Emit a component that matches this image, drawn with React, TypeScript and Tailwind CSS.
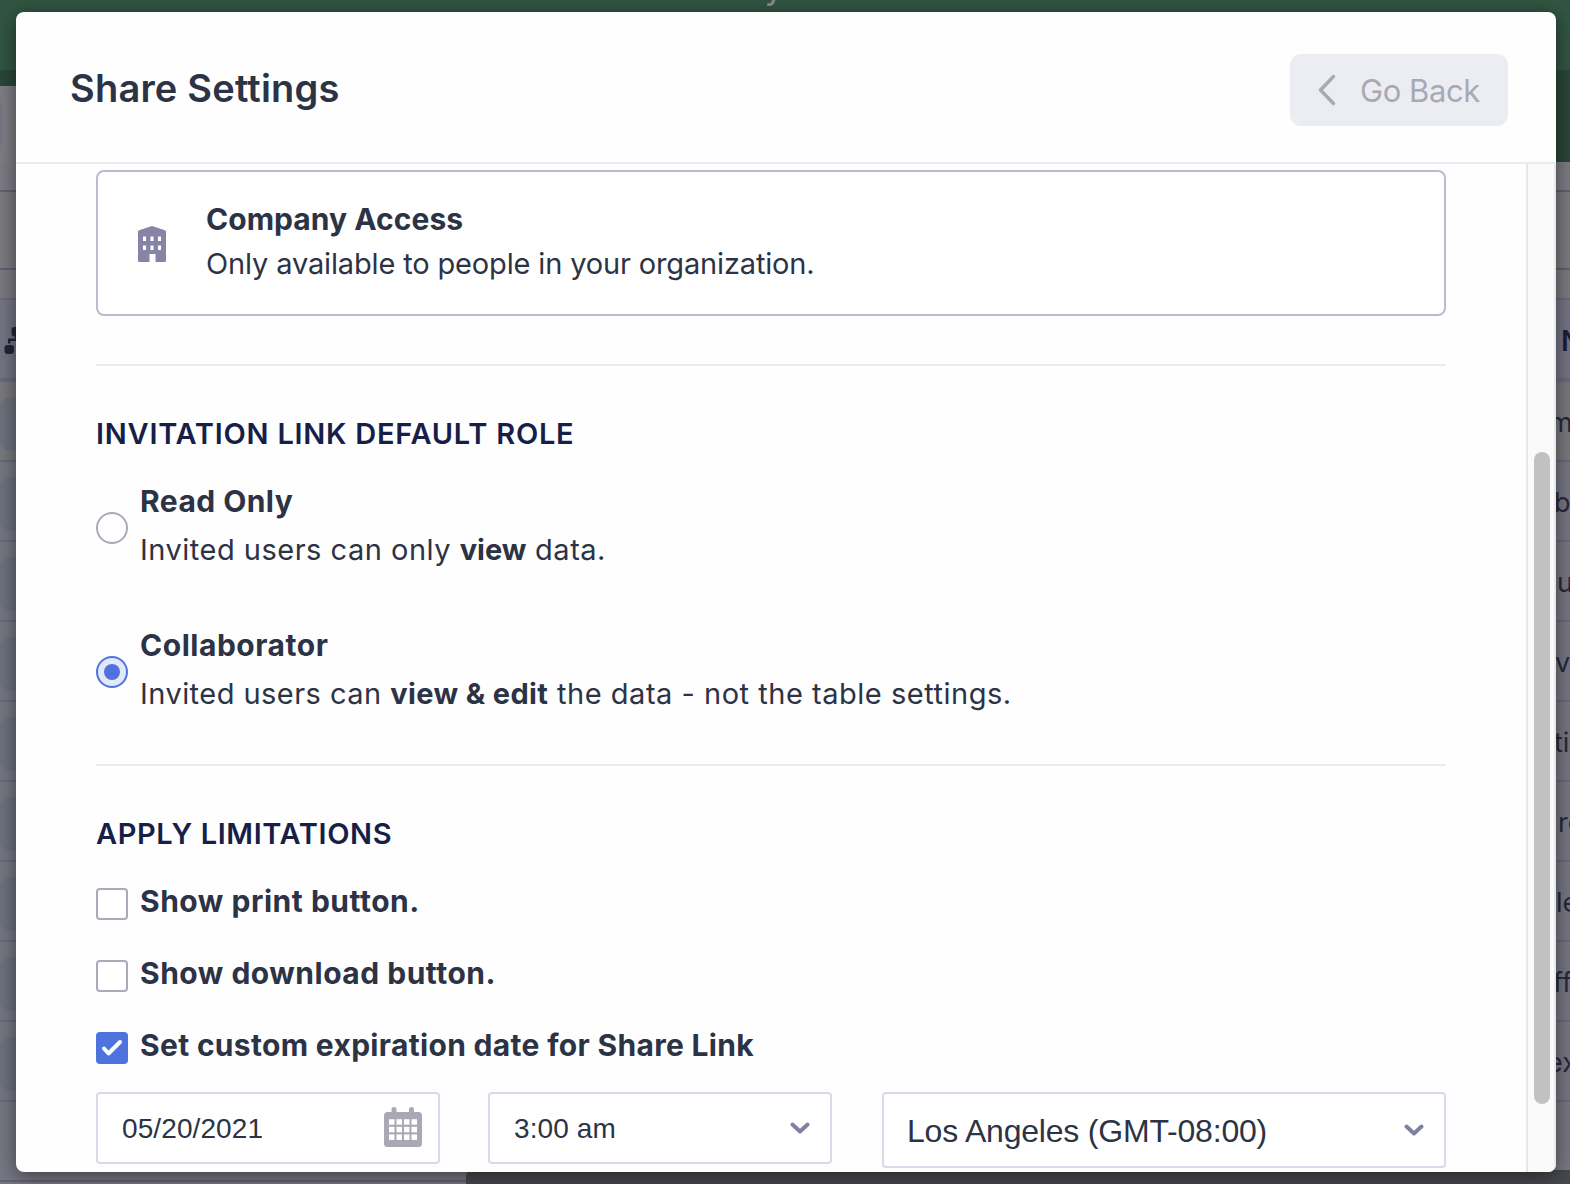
import type { ReactNode } from "react";
import clsx from "clsx";

const NAMES = ["m", "b", "u", "v", "ti", "re", "le", "ff", "ex"];
const NAME_OFFSETS = ["ml-[-7px]", "ml-[-2px]", "ml-[1px]", "ml-[-1px]", "ml-[-2px]", "ml-[2px]", "ml-[0px]", "ml-[-3px]", "ml-[-9px]"];

// Table page that stays visible around the edges of the dialog.
function TablePage() {
  return (
    <div className="flex h-[1184px] w-[1570px] flex-col bg-[#787883]">
      <div className="flex h-[70px] shrink-0 justify-center bg-[#325542]">
        <span className="-mt-[28px] ml-[-22px] text-[34px] leading-[30px] text-[#8a8c96]">y</span>
      </div>
      <div className="flex h-[92px] shrink-0 justify-between bg-[#2b4639]">
        <div className="mt-4 flex w-[400px] bg-[#7e7e85] pt-4">
          <div className="-ml-2 h-[44px] w-[10px] rounded-[4px] bg-[#747485]" />
        </div>
      </div>
      <div className="h-[30px] shrink-0 border-b-2 border-[#606072] bg-[#7c7c84]" />
      <div className="h-[78px] shrink-0 border-b-2 border-[#606072] bg-[#7b7b80]" />
      <div className="h-[30px] shrink-0 border-b-2 border-[#6a6a7e] bg-[#7a7a80]" />
      <div className="flex h-[82px] shrink-0 items-center justify-between border-b-4 border-[#6a6a7e] bg-[#747484]">
        <svg className="mt-[3px] ml-1 size-7 text-[#22263a]" viewBox="0 0 28 28" fill="currentColor">
          <rect x="7.500" y="0" width="10" height="9.500" rx="3" />
          <rect x="0.500" y="18" width="9.500" height="9" rx="3" />
          <path d="M4 11.500h7V8h3v6H6.500v2.500H4z" />
        </svg>
        <span className="w-[9px] overflow-hidden pt-1 text-[28px] font-semibold text-[#1b1f3b]">N</span>
      </div>
      {NAMES.map((name, i) => (
        <div
          key={name}
          className={clsx(
            "flex h-[80px] shrink-0 items-center justify-between border-b-2 border-[#69697a]",
            i === 0 ? "bg-[#79797e]" : "bg-[#777784]",
          )}
        >
          <div className="mt-[5px] h-[54px] w-[120px] rounded-[10px] bg-[#6c737e]" />
          <div className="w-[14px] overflow-hidden pt-1 text-[27px] whitespace-nowrap text-[#26293a]">
            <div className={NAME_OFFSETS[i]}>{name}</div>
          </div>
        </div>
      ))}
      <div className="h-[68px] shrink-0" />
      <div className="flex min-h-0 flex-1 bg-[#777784]">
        <div className="mt-[10px] h-[2px] w-[466px] bg-[#626272]" />
        <div className="flex-1 rounded-tl-[6px] bg-[#47474f]" />
      </div>
    </div>
  );
}

function BuildingIcon() {
  return (
    <svg className="mt-[2px] h-9 w-7" viewBox="0 0 28 36" fill="#8784a8">
      <path
        fillRule="evenodd"
        d="M14 0 27 4.200q1 .4 1 1.400V35q0 1-1 1h-9.500v-8h-6v8H1q-1 0-1-1V5.600q0-1 1-1.400ZM5 10.500v4.500h3v-4.500Zm7.500 0v4.500h3v-4.500Zm7.500 0v4.500h3v-4.500ZM5 19.500V24h3v-4.500Zm7.500 0V24h3v-4.500Zm7.500 0V24h3v-4.500Z"
      />
    </svg>
  );
}

function CalendarIcon() {
  return (
    <svg className="mb-[2px] h-10 w-[38px]" viewBox="0 0 38 40" fill="#a9a9b6">
      <rect x="7.500" width="5" height="10" rx="2.500" />
      <rect x="25" width="5" height="10" rx="2.500" />
      <rect y="5" width="38" height="35" rx="3.500" />
      {[12.2, 19.8, 27.4].map((y) =>
        [5, 12.5, 20, 27.5].map((x) => <rect key={`${x}-${y}`} x={x} y={y} width="5.500" height="5.500" fill="#fff" />),
      )}
    </svg>
  );
}

function Caret() {
  return (
    <svg className="h-3 w-5" viewBox="0 0 20 12" fill="none" stroke="#8080a3" strokeWidth="4" strokeLinecap="round" strokeLinejoin="round">
      <path d="m2.500 2.500 7.500 7 7.500-7" />
    </svg>
  );
}

function SectionTitle({ children, className }: { children: ReactNode; className: string }) {
  return <h2 className={clsx("mt-12 text-[29px] leading-[40px] font-semibold text-[#171f49]", className)}>{children}</h2>;
}

function Radio({ checked }: { checked?: boolean }) {
  return (
    <span
      className={clsx(
        "mt-[35px] flex size-8 shrink-0 items-center justify-center rounded-full border-2",
        checked ? "border-[#4f73de] bg-[#e2e8f9]" : "border-[#a9a9b7] bg-white",
      )}
    >
      {checked && <span className="size-4 rounded-full bg-[#4f73de]" />}
    </span>
  );
}

function Checkbox({ checked, label, className }: { checked?: boolean; label: string; className: string }) {
  return (
    <label className="flex h-8 gap-3">
      <span
        className={clsx(
          "flex size-8 shrink-0 items-center justify-center rounded-[4px]",
          checked ? "bg-[#4f73de]" : "border-2 border-[#a9a9b7] bg-white",
        )}
      >
        {checked && (
          <svg className="size-8" viewBox="0 0 32 32" fill="none" stroke="#fff" strokeWidth="4" strokeLinecap="round" strokeLinejoin="round">
            <path d="m8 16.500 4.500 5 11.500-11.500" />
          </svg>
        )}
      </span>
      <span className={clsx("-mt-[3px] text-[30px] leading-[32px] font-bold whitespace-nowrap", className)}>{label}</span>
    </label>
  );
}

export default function App() {
  return (
    <div className="relative h-[1184px] w-[1570px] overflow-hidden font-['Inter',sans-serif]">
      <TablePage />
      <div className="absolute top-3 left-4 flex h-[1160px] w-[1540px] flex-col overflow-hidden rounded-[8px] bg-[#fefefe] text-[#2c3345] shadow-[0_4px_20px_rgba(0,0,0,0.5)]">
        <header className="flex h-[152px] shrink-0 items-center justify-between border-b-2 border-[#eaeaf1] pr-12 pl-[54px]">
          <h1 className="mt-px text-[38px] leading-[48px] font-semibold tracking-[0.2px]">Share Settings</h1>
          <button className="mt-[6px] flex h-[72px] w-[218px] items-center rounded-[11px] bg-[#ecedf3] pl-7 text-[#a8a9b5]">
            <svg className="h-8 w-[18px]" viewBox="0 0 18 32" fill="none" stroke="currentColor" strokeWidth="3.500" strokeLinecap="round" strokeLinejoin="round">
              <path d="M15.500 2.500 2.500 16l13 13.500" />
            </svg>
            <span className="mt-[2px] ml-6 text-[31px] leading-[40px] tracking-[-0.45px] whitespace-nowrap">Go Back</span>
          </button>
        </header>
        <div className="flex min-h-0 flex-1">
          <main className="w-[1510px] overflow-hidden pt-[6px] pr-20 pl-20">
            <div className="flex h-[146px] items-center rounded-[8px] border-2 border-[#babbd1] bg-white pl-10">
              <BuildingIcon />
              <div className="mb-[3px] ml-10 leading-[44px] whitespace-nowrap">
                <p className="text-[30px] font-bold tracking-[0.05px]">Company Access</p>
                <p className="pt-px text-[29px] tracking-[-0.15px]">Only available to people in your organization.</p>
              </div>
            </div>
            <hr className="mt-12 border-t-2 border-[#eaeaf1]" />

            <SectionTitle className="tracking-[0.75px]">INVITATION LINK DEFAULT ROLE</SectionTitle>
            <label className="mt-[23px] flex h-24 gap-3 leading-[48px] whitespace-nowrap">
              <Radio />
              <div>
                <p className="text-[30px] font-bold tracking-[0.45px]">Read Only</p>
                <p className="pt-px text-[29px] tracking-[0.5px]">
                  Invited users can only <b className="tracking-[0px]">view</b> data.
                </p>
              </div>
            </label>
            <label className="mt-12 flex h-24 gap-3 leading-[48px] whitespace-nowrap">
              <Radio checked />
              <div>
                <p className="text-[30px] font-bold tracking-[0.53px]">Collaborator</p>
                <p className="pt-px text-[29px] tracking-[0.45px]">
                  Invited users can <b className="tracking-[0.38px]">view &amp; edit</b>
                  <span className="tracking-[0.52px]"> the data - not the table settings.</span>
                </p>
              </div>
            </label>
            <hr className="mt-[47px] border-t-2 border-[#eaeaf1]" />

            <SectionTitle className="tracking-[0.62px]">APPLY LIMITATIONS</SectionTitle>
            <div className="mt-[34px] flex flex-col gap-10">
              <Checkbox label="Show print button." className="tracking-[0.52px]" />
              <Checkbox label="Show download button." className="tracking-[0.5px]" />
              <Checkbox checked label="Set custom expiration date for Share Link" className="tracking-[0.32px]" />
            </div>
            <div className="mt-7 flex items-start font-['Liberation_Sans',sans-serif] text-[28px] whitespace-nowrap">
              <div className="flex h-[72px] w-[344px] items-center justify-between rounded-[4px] border-2 border-[#d8dae9] bg-white pr-4 pl-6">
                <span className="pt-[2px] tracking-[0.1px]">05/20/2021</span>
                <CalendarIcon />
              </div>
              <div className="ml-12 flex h-[72px] w-[344px] items-center justify-between rounded-[4px] border-2 border-[#d8dae9] bg-white pr-5 pl-6">
                <span className="pt-[2px] tracking-[0.1px]">3:00 am</span>
                <Caret />
              </div>
              <div className="ml-[50px] flex h-[76px] w-[564px] items-center justify-between rounded-[4px] border-2 border-[#d8dae9] bg-white pr-5 pl-[23px] text-[32px]">
                <span className="pt-[2px] tracking-[-0.2px]">Los Angeles (GMT-08:00)</span>
                <Caret />
              </div>
            </div>
          </main>
          <div className="w-[30px] border-x-2 border-x-[#e8e8e8] bg-[#fafafa] pt-[288px] pl-[6px]">
            <div className="h-[652px] w-4 rounded-full bg-[#c1c1c1]" />
          </div>
        </div>
      </div>
    </div>
  );
}
